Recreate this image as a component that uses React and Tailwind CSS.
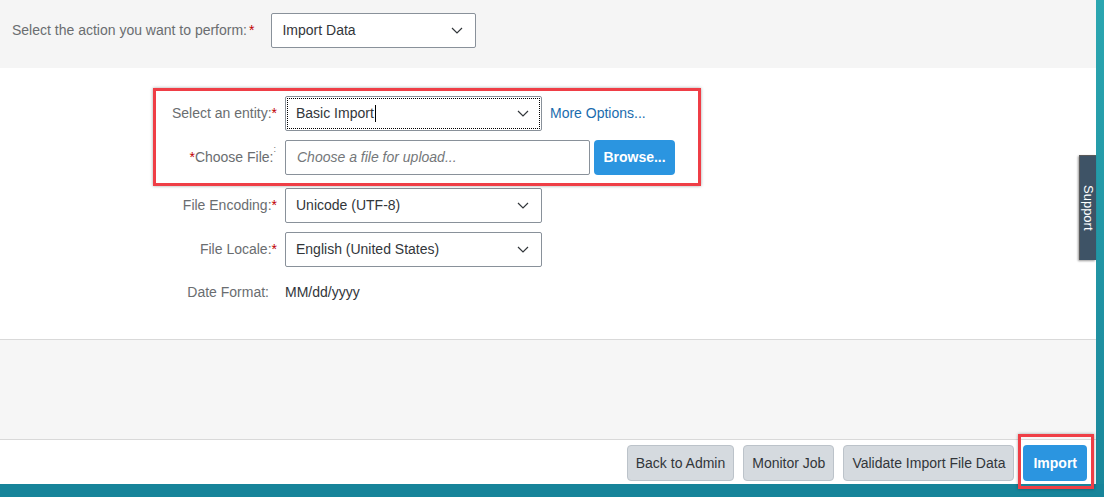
const Star = () => <span className="text-[#c00000]">*</span>;

function Chevron() {
  return (
    <svg width="12" height="7" viewBox="0 0 12 7" className="shrink-0">
      <path d="M1 1l5 5 5-5" fill="none" stroke="#32363a" strokeWidth="1.2" />
    </svg>
  );
}

function Select({ value, width, focused }) {
  return (
    <div className={`relative flex h-[35px] items-center justify-between rounded-[2px] border border-[#89919a] bg-white pl-[10px] pr-[12px] text-[14px] text-[#32363a] ${width}`}>
      {focused && <div className="pointer-events-none absolute inset-[1px] border border-dotted border-black" />}
      <span className="flex items-center">
        {value}
        {focused && <span className="ml-[1px] inline-block h-[17px] w-px bg-black" />}
      </span>
      <Chevron />
    </div>
  );
}

export default function App() {
  return (
    <div className="relative flex h-[497px] w-[1104px] flex-col overflow-hidden bg-white font-['Liberation_Sans',Arial,sans-serif]">
      <div className="flex h-[484px]">
        <div className="flex flex-1 flex-col">
          {/* action selector */}
          <div className="flex h-[68px] items-start bg-[#f5f5f5] pl-3 pt-[13px]">
            <div className="flex h-[35px] items-center text-[14px] text-[#6a6d70]">
              Select the action you want to perform:<span className="ml-[2px]"><Star /></span>
            </div>
            <div className="ml-[17px]">
              <Select value="Import Data" width="w-[205px]" />
            </div>
          </div>

          {/* form */}
          <div className="h-[271px] bg-white pt-[28px]">
            <div className="grid grid-cols-[277px_auto] items-center gap-x-2 text-[14px]">
              <div className="text-right text-[#6a6d70]">Select an entity:<Star /></div>
              <div className="flex items-center">
                <Select value="Basic Import" width="w-[257px]" focused />
                <span className="ml-[8px] text-[#1a6cae]">More Options...</span>
              </div>

              <div className="mt-[9px] pr-[1px] text-right text-[#6a6d70]">
                <Star />Choose File:<sup className="text-[9px] align-super">:</sup>
              </div>
              <div className="mt-[9px] flex items-center">
                <div className="flex h-[35px] w-[305px] items-center rounded-[2px] border border-[#89919a] bg-white pl-[11px] italic text-[#74777a]">
                  Choose a file for upload...
                </div>
                <button className="ml-[4px] h-[35px] w-[81px] rounded-[4px] bg-[#2b95e0] text-[14px] font-bold text-white">
                  Browse...
                </button>
              </div>

              <div className="mt-[13px] text-right text-[#6a6d70]">File Encoding:<Star /></div>
              <div className="mt-[13px]">
                <Select value="Unicode (UTF-8)" width="w-[257px]" />
              </div>

              <div className="mt-[9px] text-right text-[#6a6d70]">File Locale:<Star /></div>
              <div className="mt-[9px]">
                <Select value="English (United States)" width="w-[257px]" />
              </div>

              <div className="mt-[15px] pr-[8px] text-right text-[#6a6d70]">Date Format:</div>
              <div className="mt-[15px] text-[#32363a]">MM/dd/yyyy</div>
            </div>
          </div>

          {/* empty area */}
          <div className="h-[101px] border-y border-[#d9d9d9] bg-[#f6f6f6]" />

          {/* footer */}
          <div className="flex h-[44px] items-center justify-end gap-[9px] bg-white pr-[9px] pt-[2px]">
            {["Back to Admin", "Monitor Job", "Validate Import File Data"].map((b) => (
              <button key={b} className="h-[36px] rounded-[4px] border border-[#bcc3ca] bg-[#d5dadf] px-[8px] text-[14px] text-[#32363a]">
                {b}
              </button>
            ))}
            <button className="h-[36px] rounded-[4px] bg-[#2b95e0] px-[10px] text-[14px] font-bold text-white">Import</button>
          </div>
        </div>
        <div className="w-2 bg-gradient-to-b from-[#2ba6b0] to-[#1a879b]" />
      </div>
      <div className="h-[13px] bg-[#17849a]" />

      {/* Support tab */}
      <div className="absolute left-[1079px] top-[155px] flex h-[105px] w-[17px] items-center justify-center border-l border-t border-[#5a5a5a] bg-[#3e5366] shadow-[-1px_1px_2px_rgba(0,0,0,0.4)]">
        <span className="text-[13px] text-white [writing-mode:vertical-rl]">Support</span>
      </div>

      {/* annotation boxes */}
      <div className="pointer-events-none absolute left-[153px] top-[88px] h-[98px] w-[548px] border-[3px] border-[#ef3e46] shadow-[0_0_3px_rgba(0,0,0,0.35)]" />
      <div className="pointer-events-none absolute left-[1018px] top-[434px] h-[55px] w-[76px] border-[3px] border-[#ef3e46] shadow-[0_0_3px_rgba(0,0,0,0.35)]" />
    </div>
  );
}
